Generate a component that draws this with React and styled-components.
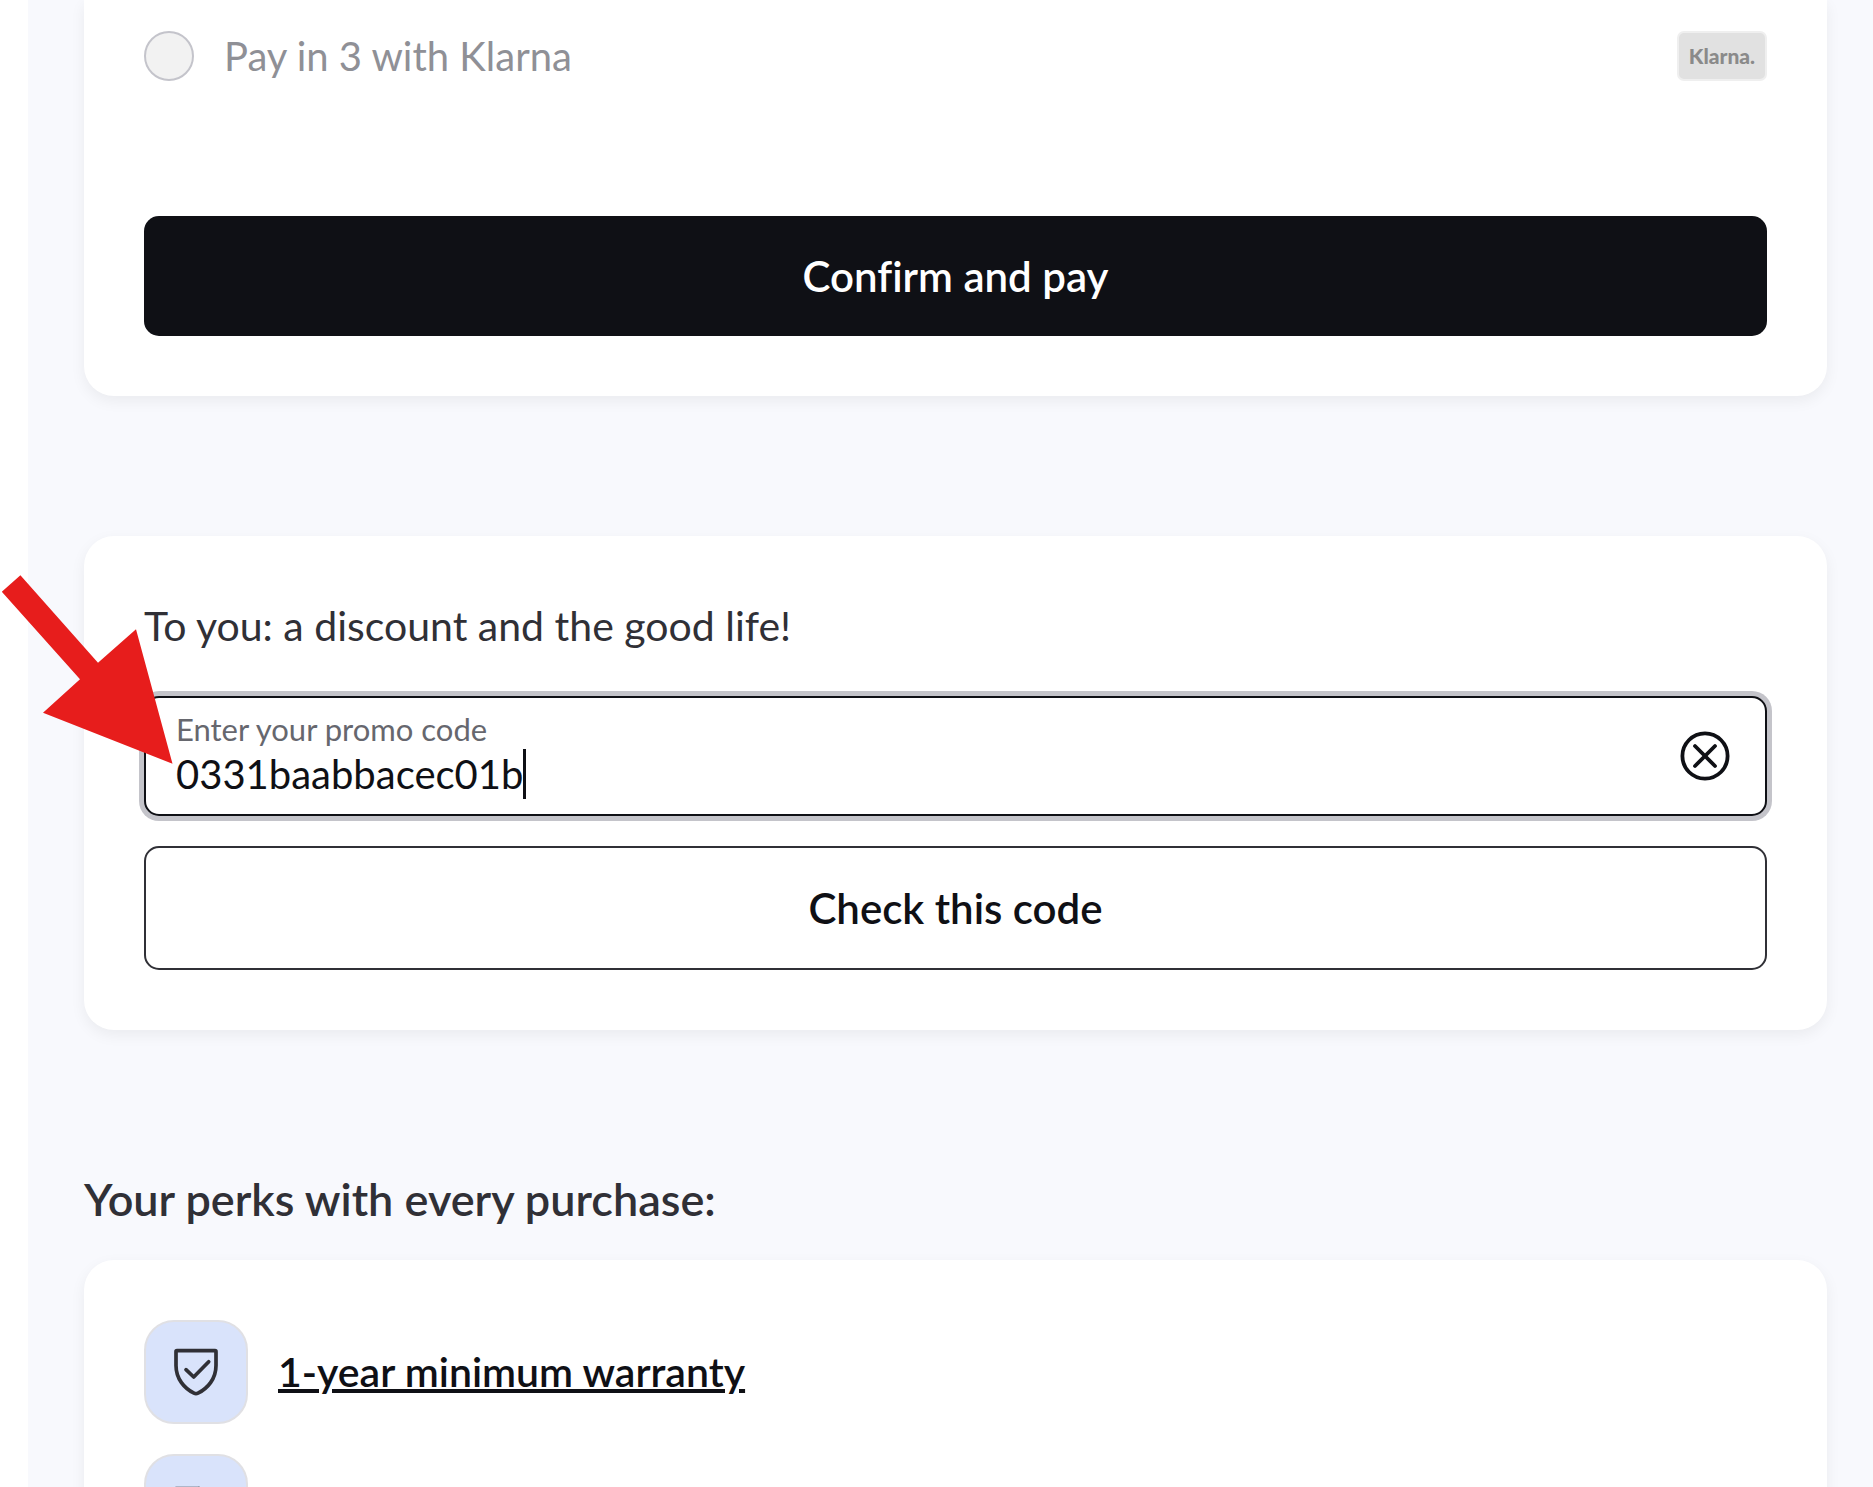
import React, { useState } from 'react';
import styled, { createGlobalStyle } from 'styled-components';

const GlobalStyle = createGlobalStyle`
  * {
    box-sizing: border-box;
  }
  body {
    margin: 0;
    background-color: #fff;
    font-family: Lato, "Open Sans", sans-serif;
    color: #303036;
  }
  h2, p, ul {
    margin: 0;
    padding: 0;
  }
  button, input {
    font-family: inherit;
  }
`

const Shell = styled.div`
  height: 100vh;
  overflow: hidden;
  padding-left: 28px;
`

const Page = styled.main`
  padding: 0 46px 0 56px;
  background-color: #f8f9fd;
`

const Card = styled.section`
  position: relative;
  padding: ${props => props.$continued ? '31px' : '60px'} 60px 60px;
  border-radius: ${props => props.$continued ? '0 0 30px 30px' : '30px'};
  background-color: #fff;
  box-shadow: 0 5px 15px rgba(15, 16, 21, 0.06);
  margin-bottom: 140px;
`

const PaymentOption = styled.div`
  display: flex;
  align-items: center;
  height: 50px;
  margin-bottom: 135px;

  > label {
    flex: 1;
    font-size: 40px;
    line-height: 50px;
    color: #8f9096;
  }
`

const Radio = styled.input`
  appearance: none;
  width: 50px;
  height: 50px;
  margin: 0 30px 0 0;
  border: 2px solid #c4c4cb;
  border-radius: 50%;
  background-color: #f2f2f2;
`

const Brand = styled.span`
  display: flex;
  justify-content: center;
  align-items: center;
  width: 90px;
  height: 50px;
  border: 2px solid #efefef;
  border-radius: 7px;
  background-color: #e1e1e1;
  font-size: 21px;
  line-height: 24px;
  font-weight: 900;
  color: #8a8a8a;
`

const Button = styled.button`
  display: block;
  width: 100%;
  padding: 35px 30px;
  border: none;
  border-radius: 15px;
  background-color: #0f1015;
  font-size: 42px;
  line-height: 50px;
  font-weight: 600;
  font-variant-ligatures: none;
  color: #fff;
  cursor: pointer;
`

const OutlineButton = styled(Button)`
  border: 2px solid #303036;
  background-color: #fff;
  color: #0f1015;
`

const Intro = styled.p`
  margin-bottom: 40px;
  font-size: 41px;
  line-height: 60px;
`

const Field = styled.div`
  display: flex;
  align-items: center;
  height: 120px;
  margin-bottom: 30px;
  padding: 0 35px 0 30px;
  border: 2px solid #0f1015;
  border-radius: 15px;
  background-color: #fff;
  box-shadow: 0 0 0 5px #c4c4ca;
`

const FieldBody = styled.div`
  flex: 1;
  padding-bottom: 4px;

  > label {
    display: block;
    font-size: 31px;
    line-height: 40px;
    color: #66676e;
  }
`

const Entry = styled.div`
  display: flex;
  align-items: center;
  height: 50px;
`

const CodeInput = styled.input`
  field-sizing: content;
  height: 50px;
  padding: 0;
  border: none;
  outline: none;
  background: none;
  font-size: 40px;
  color: #0f1015;
  caret-color: transparent;
`

const Caret = styled.span`
  width: 3px;
  height: 50px;
  background-color: #0f1015;
`

const ClearButton = styled.button`
  display: flex;
  padding: 0;
  border: none;
  background: none;
  cursor: pointer;
`

// sits over the promo card and points at the field
const Arrow = styled.svg`
  position: absolute;
  left: -84px;
  top: 36px;
  width: 180px;
  height: 200px;
`

const Title = styled.h2`
  margin-bottom: 32px;
  font-size: 45px;
  line-height: 58px;
  font-weight: 600;
`

const Perk = styled.li`
  display: flex;
  align-items: center;
  gap: 30px;
  margin-bottom: 30px;

  > a {
    font-size: 41px;
    line-height: 50px;
    font-weight: 600;
    color: #0f1015;
    text-decoration-thickness: 4px;
  }
`

const PerkIcon = styled.span`
  display: flex;
  justify-content: center;
  align-items: center;
  width: 104px;
  height: 104px;
  border: 2px solid #e0e0e4;
  border-radius: 30px;
  background-color: #d9e3fb;
`

const ShieldIcon = () => (
  <svg width="60" height="60" viewBox="0 0 60 60" fill="none" stroke="#303036" strokeWidth="3.7" strokeLinecap="round" strokeLinejoin="round" aria-hidden="true">
    <path d="M11 8.7H49a1 1 0 0 1 1 1V23.5C50 37 41.5 46.5 32 51.2Q30 52.2 28 51.2C18.5 46.5 10 37 10 23.5V9.7a1 1 0 0 1 1-1Z" />
    <path d="M20 27.7 27.7 35 42.7 19.7" />
  </svg>
)

const DocumentIcon = () => (
  <svg width="60" height="60" viewBox="0 0 60 60" fill="none" stroke="#303036" strokeWidth="3.7" strokeLinecap="round" strokeLinejoin="round" aria-hidden="true">
    <path d="M10 12.6H33L47 26V50H10Z" />
    <path d="M33 12.6V26H47" />
  </svg>
)

const App = () => {
  const [code, setCode] = useState('0331baabbacec01b');

  return (
    <>
      <GlobalStyle />
      <Shell>
        <Page>
          <Card $continued>
            <PaymentOption>
              <Radio type="radio" id="klarna" name="payment" disabled />
              <label htmlFor="klarna">Pay in 3 with Klarna</label>
              <Brand>Klarna.</Brand>
            </PaymentOption>
            <Button type="button">Confirm and pay</Button>
          </Card>

          <Card>
            <Intro>To you: a discount and the good life!</Intro>
            <Field>
              <FieldBody>
                <label htmlFor="promo">Enter your promo code</label>
                <Entry>
                  <CodeInput id="promo" type="text" value={code} onChange={e => setCode(e.target.value)} />
                  <Caret />
                </Entry>
              </FieldBody>
              <ClearButton type="button" aria-label="Clear" onClick={() => setCode('')}>
                <svg width="50" height="50" viewBox="0 0 50 50" fill="none" stroke="#0f1015" strokeWidth="3.8" strokeLinecap="round">
                  <circle cx="25" cy="25" r="22.6" />
                  <path d="M15 15 35 35M35 15 15 35" />
                </svg>
              </ClearButton>
            </Field>
            <OutlineButton type="button">Check this code</OutlineButton>
            <Arrow viewBox="0 0 180 200" aria-hidden="true">
              <path d="M20.4 3.3 98 90.7 136 57.3 172.5 191.7 43 140.7 80 107.3 1.8 19.7Z" fill="#e71d1c" />
            </Arrow>
          </Card>

          <Title>Your perks with every purchase:</Title>
          <Card as="ul">
            <Perk>
              <PerkIcon><ShieldIcon /></PerkIcon>
              <a href="#warranty">1-year minimum warranty</a>
            </Perk>
            <Perk>
              <PerkIcon><DocumentIcon /></PerkIcon>
            </Perk>
          </Card>
        </Page>
      </Shell>
    </>
  )
}

export default App;
